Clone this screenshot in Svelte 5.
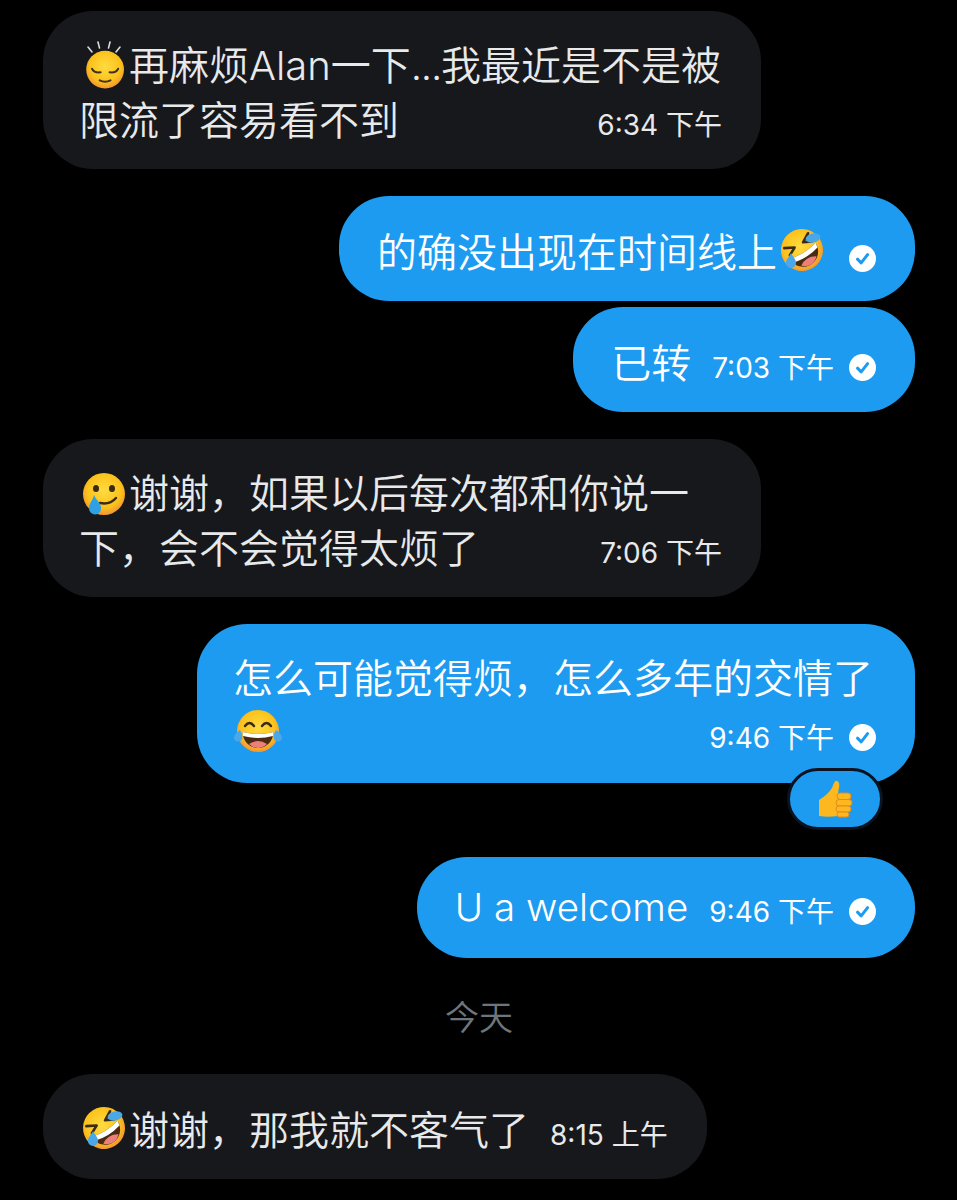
<script>
	const check = 'M8.5 14.2 L12.2 17.8 L18.6 9.6';
</script>

{#snippet tick()}
	<svg class="tick" viewBox="0 0 27 27" aria-hidden="true">
		<circle cx="13.5" cy="13.5" r="13.5" fill="#fff" />
		<path d={check} fill="none" stroke="#1d9bf0" stroke-width="3" stroke-linecap="round" stroke-linejoin="round" />
	</svg>
{/snippet}

{#snippet meta(time)}
	<span class="meta">{time}</span>
{/snippet}

{#snippet face(id)}
	<defs>
		<radialGradient {id} cx="50%" cy="42%" r="58%">
			<stop offset="0" stop-color="#fedb41" />
			<stop offset="0.7" stop-color="#fcc21b" />
			<stop offset="1" stop-color="#f19534" />
		</radialGradient>
	</defs>
	<circle cx="24" cy="24" r="21" fill="url(#{id})" />
{/snippet}

{#snippet sleepy()}
	<svg class="emoji" viewBox="0 0 48 48" aria-hidden="true">
		<g stroke="#d7dde0" stroke-width="1.6" stroke-linecap="round">
			<path d="M8 5 L12 10" /><path d="M18 0 L19.5 6" /><path d="M30 0 L28.5 6" /><path d="M40 5 L36 10" />
		</g>
		<g transform="translate(3.5 6) scale(0.9)">
			{@render face('sleepy-skin')}
			<g fill="none" stroke="#40301c" stroke-width="2.2" stroke-linecap="round">
				<path d="M9.5 23 Q12 28 19 27" />
				<path d="M38.5 23 Q36 28 29 27" />
				<path d="M18 36 Q24 39 30 36" />
			</g>
		</g>
	</svg>
{/snippet}

{#snippet tearSmile()}
	<svg class="emoji" viewBox="0 0 48 48" aria-hidden="true">
		{@render face('tear-skin')}
		<ellipse cx="16" cy="18.5" rx="3" ry="3.6" fill="#3a2a16" />
		<ellipse cx="32" cy="18.5" rx="3" ry="3.6" fill="#3a2a16" />
		<path d="M20 33 Q30 35 36 28" fill="none" stroke="#3a2a16" stroke-width="2.4" stroke-linecap="round" />
		<path d="M14 25 C16 30 21 33 21 38 A6 6 0 0 1 9 39 C9 33 13 30 14 25 Z" fill="#2f9fe6" />
	</svg>
{/snippet}

{#snippet laugh(id)}
	<svg class="emoji lifted" viewBox="0 0 48 48" aria-hidden="true">
		{@render face(id)}
		<g fill="none" stroke="#3a2a16" stroke-width="2.4" stroke-linecap="round" stroke-linejoin="round">
			<path d="M11 19 Q15.5 13 20 19" />
			<path d="M28 19 Q32.5 13 37 19" />
		</g>
		<path d="M8.5 25 Q24 29 39.5 25 C39 35 32 41 24 41 C16 41 9 35 8.5 25 Z" fill="#4a2a12" />
		<path d="M8.5 25 Q24 29 39.5 25 L39 29 Q24 33 9 29 Z" fill="#fff" />
		<path d="M15 37 Q24 31 33 37 Q29 41 24 41 Q19 41 15 37 Z" fill="#ec7f7a" />
		<path d="M6 23 C8 26 9 29 8 32 A4.2 4.2 0 0 1 0 31 C0 28 3 25 6 23 Z" fill="#4aa8e8" />
		<path d="M42 23 C40 26 39 29 40 32 A4.2 4.2 0 0 0 48 31 C48 28 45 25 42 23 Z" fill="#4aa8e8" />
	</svg>
{/snippet}

{#snippet rolling(id)}
	<svg class="emoji lifted" viewBox="0 0 48 48" aria-hidden="true">
		<g transform="rotate(-32 24 24)">
			{@render face(id)}
			<g fill="none" stroke="#3a2a16" stroke-width="2.6" stroke-linecap="round" stroke-linejoin="round">
				<path d="M10 13 L19 18 L11 22" />
				<path d="M38 13 L29 18 L37 22" />
			</g>
			<path d="M8.5 25 Q24 29 39.5 25 C39 35 32 41 24 41 C16 41 9 35 8.5 25 Z" fill="#4a2a12" />
			<path d="M8.5 25 Q24 29 39.5 25 L38.5 30 Q24 34 9.5 30 Z" fill="#fff" />
			<path d="M15 37 Q24 31 33 37 Q29 41 24 41 Q19 41 15 37 Z" fill="#ec7f7a" />
		</g>
		<ellipse cx="35" cy="12" rx="7.5" ry="4.5" transform="rotate(-12 35 12)" fill="#4aa8e8" />
		<path d="M13 27 C15 31 18 33 18 37 A5 5 0 0 1 8 37 C8 33 11 31 13 27 Z" fill="#4aa8e8" />
	</svg>
{/snippet}

{#snippet thumb()}
	<svg class="thumb" viewBox="0 0 38 38" aria-hidden="true">
		<path d="M3 20 C8 17 13 13 16 8 C18 3 19 0 21 1 C24 2 23.5 7 22.5 10 L22 14 L22 36 C15 37 9 37 3 36 Z" fill="#fcb81e" />
		<g fill="#fcb81e" stroke="#e8891c" stroke-width="1">
			<rect x="21" y="13" width="14" height="6.5" rx="3.2" />
			<rect x="20" y="19.5" width="16" height="6.5" rx="3.2" />
			<rect x="20" y="26" width="15" height="6" rx="3" />
			<rect x="21" y="32" width="12" height="5" rx="2.5" />
		</g>
	</svg>
{/snippet}

<main class="thread">
	<section class="bubble in wide">
		<div class="row">
			<span class="text">{@render sleepy()}再麻烦Alan一下<span class="dots">...</span>我最近是不是被</span>
		</div>
		<div class="row">
			<span class="text">限流了容易看不到</span>
			{@render meta('6:34 下午')}
		</div>
	</section>

	<section class="bubble out">
		<div class="row">
			<span class="text">的确没出现在时间线上{@render rolling('roll-a')}</span>
			<span class="status">{@render tick()}</span>
		</div>
	</section>

	<section class="bubble out joined">
		<div class="row">
			<span class="text">已转</span>
			{@render meta('7:03 下午')}
			{@render tick()}
		</div>
	</section>

	<section class="bubble in wide">
		<div class="row">
			<span class="text">{@render tearSmile()}谢谢，如果以后每次都和你说一</span>
		</div>
		<div class="row">
			<span class="text">下，会不会觉得太烦了</span>
			{@render meta('7:06 下午')}
		</div>
	</section>

	<section class="bubble out wide reacted">
		<div class="row">
			<span class="text">怎么可能觉得烦，怎么多年的交情了</span>
		</div>
		<div class="row">
			<span class="text">{@render laugh('joy')}</span>
			<span class="right">
				{@render meta('9:46 下午')}
				{@render tick()}
			</span>
		</div>
		<div class="reaction">{@render thumb()}</div>
	</section>

	<section class="bubble out latin">
		<div class="row">
			<span class="text">U a welcome</span>
			{@render meta('9:46 下午')}
			{@render tick()}
		</div>
	</section>

	<div class="day">今天</div>

	<section class="bubble in">
		<div class="row">
			<span class="text">{@render rolling('roll-b')}谢谢，那我就不客气了</span>
			{@render meta('8:15 上午')}
		</div>
	</section>
</main>

<style>
	:global(body) {
		background: #000;
	}

	.thread {
		display: flex;
		flex-direction: column;
		align-items: flex-start;
		height: 1200px;
		box-sizing: border-box;
		overflow: hidden;
		padding: 11px 42px 0 43px;
		background: #000;
		font-family: Inter, "Noto Sans CJK SC", sans-serif;
	}

	.bubble {
		position: relative;
		box-sizing: border-box;
		padding: 29px 39px 21px 38px;
		margin-bottom: 27px;
		border-radius: 50px;
		font-size: 40px;
		font-weight: 350;
		line-height: 55px;
	}

	.in {
		padding-left: 36px;
		background: #16181c;
		color: #e7e9ea;
	}

	.out {
		align-self: flex-end;
		background: #1d9bf0;
		color: #fff;
	}

	.wide {
		width: 718px;
		padding-top: 27px;
		padding-left: 36px;
	}

	.bubble:has(+ .joined) {
		margin-bottom: 6px;
	}

	.reacted {
		margin-bottom: 74px;
		padding-bottom: 22px;
	}

	.latin {
		padding-top: 25px;
		padding-bottom: 25px;
		line-height: 51px;
		font-size: 38.5px;
	}

	.row {
		display: flex;
		align-items: center;
		justify-content: space-between;
		gap: 21px;
		min-height: 51px;
		white-space: nowrap;
	}

	.wide .row {
		min-height: 55px;
	}

	.text {
		display: inline-flex;
		align-items: center;
	}

	.dots {
		letter-spacing: -1.2px;
	}

	.right {
		display: flex;
		align-items: center;
		gap: 21px;
	}

	.status {
		display: flex;
		margin-left: 7px;
		padding-top: 12px;
	}

	.meta {
		margin-top: 8px;
		font-size: 28px;
		font-weight: 400;
		line-height: 34px;
	}

	.tick {
		flex: none;
		width: 27px;
		height: 27px;
		margin-top: 7px;
		margin-left: -6px;
	}

	.status .tick {
		margin-top: 0;
	}

	.emoji {
		flex: none;
		width: 48px;
		height: 48px;
		margin: 0 1px;
		overflow: visible;
	}

	.lifted {
		margin-top: -6px;
	}

	.reaction {
		position: absolute;
		right: 32px;
		bottom: -47px;
		display: flex;
		align-items: center;
		justify-content: center;
		box-sizing: border-box;
		width: 96px;
		height: 62px;
		border: 3px solid #0b1220;
		border-radius: 31px;
		background: #1d9bf0;
	}

	.thumb {
		width: 38px;
		height: 38px;
	}

	.day {
		align-self: center;
		margin: 12px 0 35px;
		color: #6e767d;
		font-size: 34px;
		font-weight: 350;
		line-height: 42px;
	}
</style>
